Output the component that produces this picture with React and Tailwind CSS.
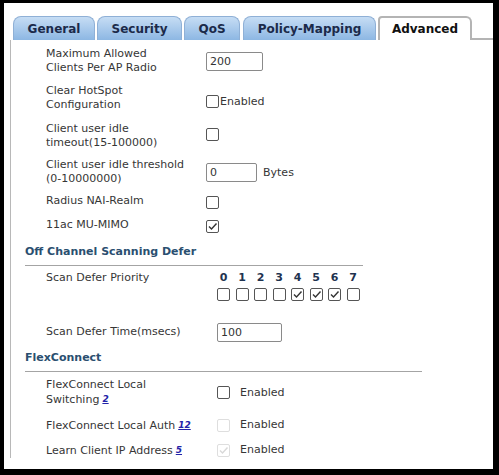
import React from "react";

function Box({ checked, disabled }) {
  return (
    <span
      className={`relative inline-block shrink-0 w-[13px] h-[13px] rounded-[2px] border bg-white ${
        disabled ? "border-[#dedede]" : "border-[#555]"
      }`}
    >
      {checked && (
        <svg viewBox="0 0 11 11" className="absolute inset-0 w-[11px] h-[11px]">
          <path
            d="M2 5.5l2.5 2.5L9.5 2.5"
            fill="none"
            stroke={disabled ? "#d8d8d8" : "#333"}
            strokeWidth="1.4"
          />
        </svg>
      )}
    </span>
  );
}

function TextBox({ value, width }) {
  return (
    <div
      className={`${width} h-[19px] border border-[#8a8a8a] rounded-[2px] bg-white pl-[3px] text-[11px] leading-[17px] text-[#333]`}
    >
      {value}
    </div>
  );
}

function Sup({ children }) {
  return (
    <span className="ml-[3px] text-[9px] font-bold italic underline text-[#2323a8] align-[1px]">
      {children}
    </span>
  );
}

const tabs = [
  { name: "General", w: "w-[82px]", mr: "mr-[2px]" },
  { name: "Security", w: "w-[85px]", mr: "mr-[2px]" },
  { name: "QoS", w: "w-[56px]", mr: "mr-[3px]" },
  { name: "Policy-Mapping", w: "w-[133px]", mr: "mr-[2px]" },
];

export default function App() {
  return (
    <div className="w-[499px] h-[475px] bg-white border-black border-l-4 border-t-[3px] border-r-[6px] border-b-[6px] font-['DejaVu_Sans',Verdana,sans-serif] text-[#363636] overflow-hidden">
      {/* tab strip */}
      <div className="flex h-[37px] pt-[13px] pl-[9px]">
        {tabs.map((t) => (
          <div
            key={t.name}
            className={`${t.w} ${t.mr} h-[24px] flex items-center justify-center rounded-t-[8px] border border-b-0 border-[#8fb0d6] bg-gradient-to-b from-[#c6ddf4] to-[#8db7e3] text-[12px] font-bold text-[#1b2a4a]`}
          >
            {t.name}
          </div>
        ))}
        <div className="w-[94px] h-[24px] flex items-center justify-center rounded-tr-[6px] rounded-tl-[4px] border-2 border-b-0 border-[#b4b4b4] bg-white text-[12px] font-bold text-[#111]">
          Advanced
        </div>
        <div className="flex-1 h-[24px] border-b-2 border-[#b4b4b4]" />
      </div>

      {/* panel */}
      <div className="ml-[6px] h-[418px] border-l border-[#b8b8b8] pt-[7px] text-[11px] leading-[14px]">
        {/* section 1 */}
        <div className="pl-[35px]">
          <div className="flex h-[28px]">
            <div className="w-[160px]">
              Maximum Allowed
              <br />
              Clients Per AP Radio
            </div>
            <div className="pt-[5px]">
              <TextBox value="200" width="w-[57px]" />
            </div>
          </div>

          <div className="flex h-[28px] mt-[9px]">
            <div className="w-[160px]">
              Clear HotSpot
              <br />
              Configuration
            </div>
            <div className="pt-[7px] flex items-center">
              <Box />
              <span className="ml-[1px]">Enabled</span>
            </div>
          </div>

          <div className="flex h-[28px] mt-[10px]">
            <div className="w-[160px]">
              Client user idle
              <br />
              timeout(15-100000)
            </div>
            <div className="pt-[6px]">
              <Box />
            </div>
          </div>

          <div className="flex h-[28px] mt-[8px]">
            <div className="w-[160px]">
              Client user idle threshold
              <br />
              (0-10000000)
            </div>
            <div className="pt-[5px] flex items-center h-[24px]">
              <TextBox value="0" width="w-[51px]" />
              <span className="ml-[6px]">Bytes</span>
            </div>
          </div>

          <div className="flex h-[14px] mt-[8px]">
            <div className="w-[160px]">Radius NAI-Realm</div>
            <div className="pt-[2px]">
              <Box />
            </div>
          </div>

          <div className="flex h-[14px] mt-[10px]">
            <div className="w-[160px]">11ac MU-MIMO</div>
            <div className="pt-[2px]">
              <Box checked />
            </div>
          </div>
        </div>

        {/* Off Channel Scanning Defer */}
        <div className="ml-[14px] w-[338px] mt-[13px] pb-[6px] border-b border-[#a4a4a4] font-bold text-[#2a4f70]">
          Off Channel Scanning Defer
        </div>

        <div className="pl-[35px]">
          <div className="flex mt-[5px]">
            <div className="w-[171px]">Scan Defer Priority</div>
            <div className="flex">
              {[0, 1, 2, 3, 4, 5, 6, 7].map((n) => (
                <div key={n} className="w-[18.5px] flex flex-col">
                  <div className="w-[13px] text-center font-bold text-[#1f3350]">{n}</div>
                  <div className="mt-[3px]">
                    <Box checked={n >= 4 && n <= 6} />
                  </div>
                </div>
              ))}
            </div>
          </div>

          <div className="flex mt-[18px]">
            <div className="w-[171px] pt-[2px]">Scan Defer Time(msecs)</div>
            <TextBox value="100" width="w-[65px]" />
          </div>
        </div>

        {/* FlexConnect */}
        <div className="ml-[14px] w-[397px] mt-[9px] pb-[6px] border-b border-[#a4a4a4] font-bold text-[#2a4f70]">
          FlexConnect
        </div>

        <div className="pl-[35px]">
          <div className="flex h-[28px] mt-[6px]">
            <div className="w-[171px]">
              FlexConnect Local
              <br />
              Switching<Sup>2</Sup>
            </div>
            <div className="pt-[8px] flex items-center h-[21px]">
              <Box />
              <span className="ml-[10px]">Enabled</span>
            </div>
          </div>

          <div className="flex h-[14px] mt-[12px]">
            <div className="w-[171px]">
              FlexConnect Local Auth<Sup>12</Sup>
            </div>
            <div className="flex items-center">
              <Box disabled />
              <span className="ml-[10px]">Enabled</span>
            </div>
          </div>

          <div className="flex h-[14px] mt-[11px]">
            <div className="w-[171px]">
              Learn Client IP Address<Sup>5</Sup>
            </div>
            <div className="flex items-center">
              <Box checked disabled />
              <span className="ml-[10px]">Enabled</span>
            </div>
          </div>
        </div>
      </div>
    </div>
  );
}
